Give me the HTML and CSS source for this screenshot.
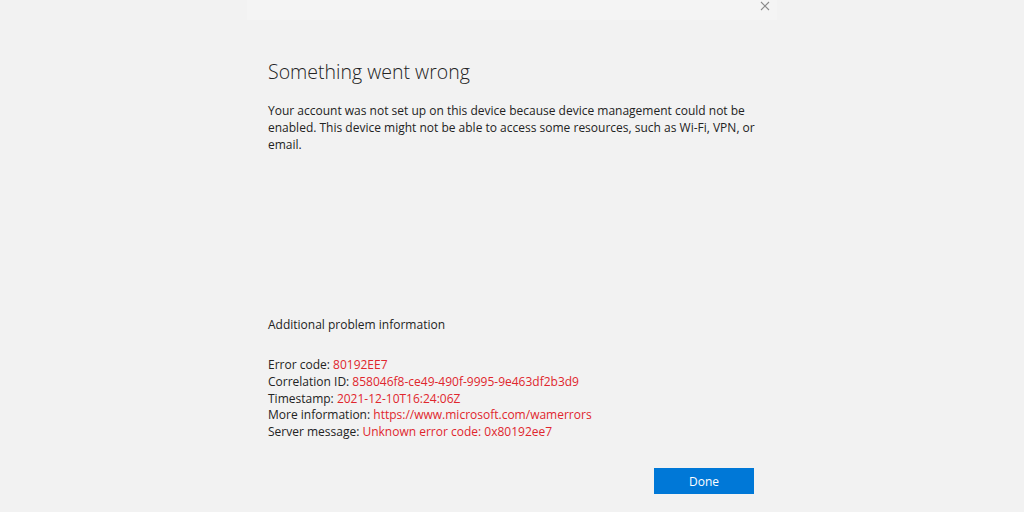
FILE: index.html
```html
<!DOCTYPE html>
<html lang="en">
<head>
    <meta charset="UTF-8">
    <meta name="viewport" content="width=device-width, initial-scale=1.0">
    <title>Something went wrong</title>
    <link rel="stylesheet" href="styles.css">
</head>
<body>
    <div class="dialog">
        <div class="titlebar">
            <button class="close" aria-label="Close">
                <svg width="10" height="10" viewBox="0 0 10 10">
                    <path d="M1 1 L9 9 M9 1 L1 9" stroke="#8a8a8a" stroke-width="1.1" fill="none"/>
                </svg>
            </button>
        </div>

        <div class="content">
            <h1>Something went wrong</h1>
            <p class="message">Your account was not set up on this device because device management could not be enabled. This device might not be able to access some resources, such as Wi-Fi, VPN, or email.</p>

            <div class="details">
                <h2>Additional problem information</h2>
                <ul class="info">
                    <li>Error code: <span class="value">80192EE7</span></li>
                    <li>Correlation ID: <span class="value">858046f8-ce49-490f-9995-9e463df2b3d9</span></li>
                    <li>Timestamp: <span class="value">2021-12-10T16:24:06Z</span></li>
                    <li>More information: <span class="value">https://www.microsoft.com/wamerrors</span></li>
                    <li>Server message: <span class="value">Unknown error code: 0x80192ee7</span></li>
                </ul>
            </div>
        </div>

        <div class="actions">
            <button class="primary">Done</button>
        </div>
    </div>
</body>
</html>
```

FILE: styles.css
```css
body {
    font-family: "Segoe UI", "Open Sans", sans-serif;
    background-color: #f2f2f2;
    color: #232323;
    margin: 0;
    padding: 0;
    height: 512px;
    overflow: hidden;
}
.dialog {
    width: 530px;
    height: 512px;
    margin: 0 auto;
    display: flex;
    flex-direction: column;
    box-sizing: border-box;
}
.titlebar {
    height: 20px;
    background: #f4f4f4;
    display: flex;
    justify-content: flex-end;
}
.close {
    background: none;
    border: none;
    padding: 0;
    width: 22px;
    height: 12px;
    margin-right: 1px;
    display: flex;
    justify-content: center;
    align-items: center;
    cursor: pointer;
}
.content {
    flex: 1;
    padding: 0 16px 0 21px;
    display: flex;
    flex-direction: column;
}
h1 {
    font-size: 19.5px;
    font-weight: 300;
    margin: 38px 0 0;
    line-height: 28px;
}
.message {
    font-size: 12px;
    line-height: 17px;
    margin: 16px 0 0;
    max-width: 490px;
}
.details {
    margin-top: 163px;
}
h2 {
    font-size: 12px;
    font-weight: normal;
    line-height: 17px;
    margin: 0;
}
.info {
    list-style: none;
    margin: 24px 0 0;
    padding: 0;
    font-size: 12px;
    line-height: 16.75px;
}
.value {
    color: #e0262d;
}
.actions {
    display: flex;
    justify-content: flex-end;
    padding: 0 23px 18px 0;
}
.primary {
    background-color: #0078d7;
    color: white;
    border: none;
    width: 100px;
    height: 26px;
    font-family: inherit;
    font-size: 12px;
    cursor: pointer;
}
```
